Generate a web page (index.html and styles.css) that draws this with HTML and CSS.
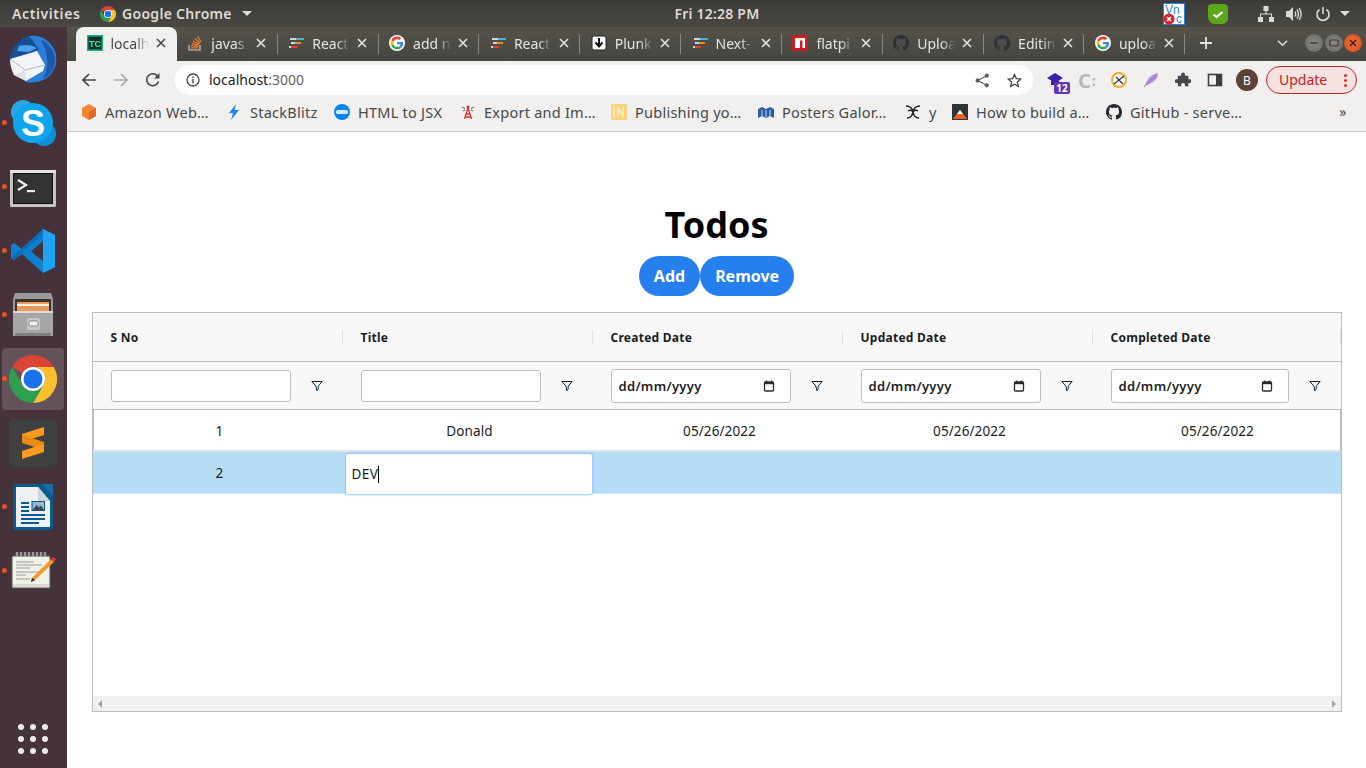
FILE: index.html
```html
<!DOCTYPE html>
<html lang="en">
<head>
    <meta charset="UTF-8">
    <meta name="viewport" content="width=device-width, initial-scale=1.0">
    <title>Todos</title>
    <link rel="stylesheet" href="styles.css">
</head>
<body>
    <!-- shared icons -->
    <svg class="defs" width="0" height="0">
        <symbol id="i-chrome" viewBox="0 0 48 48">
            <path fill="#db4437" d="M24 0A24 24 0 0 1 44.8 12H24A12 12 0 0 0 13.6 18L3.2 12A24 24 0 0 1 24 0z"/>
            <path fill="#fbc02d" d="M44.8 12A24 24 0 0 1 24 48L34.4 30A12 12 0 0 0 24 12z"/>
            <path fill="#2e9e4f" d="M3.2 12L13.6 30A12 12 0 0 0 34.4 30L24 48A24 24 0 0 1 3.2 12z"/>
            <circle cx="24" cy="24" r="12" fill="#fff"/>
            <circle cx="24" cy="24" r="9.5" fill="#1a73e8"/>
        </symbol>
        <symbol id="i-google" viewBox="-6 -6 60 60">
            <circle cx="24" cy="24" r="30" fill="#fff"/>
            <path fill="#EA4335" d="M24 9.5c3.54 0 6.71 1.22 9.21 3.6l6.85-6.85C35.9 2.38 30.47 0 24 0 14.62 0 6.51 5.38 2.56 13.22l7.98 6.19C12.43 13.72 17.74 9.5 24 9.5z"/>
            <path fill="#4285F4" d="M46.98 24.55c0-1.57-.15-3.09-.38-4.55H24v9.02h12.94c-.58 2.96-2.26 5.48-4.78 7.18l7.73 6c4.51-4.18 7.09-10.36 7.09-17.65z"/>
            <path fill="#FBBC05" d="M10.53 28.59c-.48-1.45-.76-2.99-.76-4.59s.27-3.14.76-4.59l-7.98-6.19C.92 16.46 0 20.12 0 24c0 3.88.92 7.54 2.56 10.78l7.97-6.19z"/>
            <path fill="#34A853" d="M24 48c6.48 0 11.93-2.13 15.89-5.81l-7.73-6c-2.15 1.45-4.92 2.3-8.16 2.3-6.26 0-11.57-4.22-13.47-9.91l-7.98 6.19C6.51 42.62 14.62 48 24 48z"/>
        </symbol>
        <symbol id="i-github" viewBox="0 0 16 16">
            <path fill="currentColor" d="M8 0C3.58 0 0 3.58 0 8c0 3.54 2.29 6.53 5.47 7.59.4.07.55-.17.55-.38 0-.19-.01-.82-.01-1.49-2.01.37-2.53-.49-2.69-.94-.09-.23-.48-.94-.82-1.13-.28-.15-.68-.52-.01-.53.63-.01 1.08.58 1.23.82.72 1.21 1.87.87 2.33.66.07-.52.28-.87.51-1.07-1.78-.2-3.64-.89-3.64-3.95 0-.87.31-1.59.82-2.15-.08-.2-.36-1.02.08-2.12 0 0 .67-.21 2.2.82.64-.18 1.32-.27 2-.27.68 0 1.36.09 2 .27 1.53-1.04 2.2-.82 2.2-.82.44 1.1.16 1.92.08 2.12.51.56.82 1.27.82 2.15 0 3.07-1.87 3.75-3.65 3.95.29.25.54.73.54 1.48 0 1.07-.01 1.93-.01 2.2 0 .21.15.46.55.38A8.013 8.013 0 0016 8c0-4.42-3.58-8-8-8z"/>
        </symbol>
        <symbol id="i-lines" viewBox="0 0 16 16">
            <rect x="2" y="3" width="9" height="2" fill="#cfd8dc"/>
            <rect x="8" y="3" width="8" height="2" fill="#4db6c6"/>
            <rect x="3" y="7" width="6" height="2" fill="#cfd8dc"/>
            <rect x="7" y="7" width="6" height="2" fill="#f08a24"/>
            <rect x="1" y="11" width="4" height="2" fill="#cfd8dc"/>
            <rect x="3" y="11" width="6" height="2" fill="#e53935"/>
        </symbol>
        <symbol id="i-close" viewBox="0 0 12 12">
            <path d="M2 2l8 8M10 2l-8 8" stroke="currentColor" stroke-width="1.6" fill="none"/>
        </symbol>
        <symbol id="i-filter" viewBox="0 0 12 12">
            <path d="M.8 1.500h10.400L7.300 6v2.200L6 11 4.800 6z" fill="none" stroke="#181d1f" stroke-width="1"/>
            <path d="M6 11l1.300-2.800V6" fill="none" stroke="#2196f3" stroke-width="1"/>
        </symbol>
        <symbol id="i-cal" viewBox="0 0 12 12">
            <rect x="1.500" y="2" width="9" height="9" rx="1" fill="none" stroke="#2b2b2b" stroke-width="1.300"/>
            <rect x="1" y="2" width="10" height="2.200" fill="#2b2b2b"/>
            <rect x="2.800" y="0.500" width="1.300" height="2" fill="#2b2b2b"/>
            <rect x="7.900" y="0.500" width="1.300" height="2" fill="#2b2b2b"/>
        </symbol>
    </svg>

    <header class="topbar">
        <div class="topbar-left">
            <span class="activities">Activities</span>
            <span class="app-menu">
                <svg class="app-icon"><use href="#i-chrome"/></svg>
                Google Chrome
                <span class="caret"></span>
            </span>
        </div>
        <div class="clock">Fri 12:28 PM</div>
        <div class="tray">
            <svg class="tray-vnc" viewBox="0 0 22 22">
                <rect x="0.500" y="0.500" width="21" height="21" fill="#fff" stroke="#2f7fd8"/>
                <text x="2" y="11" class="vnc-text">Vn</text>
                <text x="13" y="20" class="vnc-text">c</text>
                <circle cx="6" cy="16" r="5.500" fill="#d9232e"/>
                <path d="M4 14l4 4M8 14l-4 4" stroke="#fff" stroke-width="1.500"/>
            </svg>
            <svg class="tray-check" viewBox="0 0 22 22">
                <path d="M5 1h12q4 0 4 4v10q0 5-5 6H7q-5-1-6-7V5q0-4 4-4z" fill="#5ba71b"/>
                <path d="M6.500 11.500l3 2.500 6-5" stroke="#fff" stroke-width="2.200" fill="none"/>
            </svg>
            <svg class="tray-net" viewBox="0 0 16 16">
                <path d="M5.500 0h5v5h-2v2.500H14V11h2v5h-5v-5h2V8.500H3V11h2v5H0v-5h2V7.500h5.500V5h-2z" fill="#dcdad5"/>
            </svg>
            <svg class="tray-sound" viewBox="0 0 16 16">
                <path d="M0 5h3l4-4v14l-4-4H0z" fill="#dcdad5"/>
                <path d="M9 5.500q1.500 2.500 0 5M11 3.500q3 4.500 0 9M13.200 2q3.800 6 0 12" fill="none" stroke="#dcdad5" stroke-width="1.400"/>
            </svg>
            <svg class="tray-power" viewBox="0 0 16 16">
                <path d="M8 1v7" stroke="#dcdad5" stroke-width="1.600"/>
                <path d="M4.500 3.500a6 6 0 1 0 7 0" fill="none" stroke="#dcdad5" stroke-width="1.600"/>
            </svg>
            <span class="caret"></span>
        </div>
    </header>

    <div class="desktop">
        <nav class="dock">
            <div class="dock-item">
                <svg class="dock-icon" viewBox="0 0 48 48">
                    <path d="M20 1Q38-1 46 16 51 32 38 43 28 49 16 47 26 38 28 26 26 12 10 14 12 5 20 1z" fill="#2b7fd6"/>
                    <path d="M32 5Q46 12 46 26 45 38 34 44 40 32 38 22 36 12 32 5z" fill="#1c57a8"/>
                    <path d="M20 1Q8 4 3 16 0 22 1 28L12 21 30 15Q26 8 20 1z" fill="#174f96"/>
                    <path d="M10 11Q20 8 28 13L20 17 8 16z" fill="#4aa3ea"/>
                    <path d="M1 24L28 16 36 30 34 36 17 46 5 40Q1 32 1 24z" fill="#f3f4f7"/>
                    <path d="M1 24l15 11 20-5" fill="none" stroke="#b5bac4" stroke-width="1"/>
                    <path d="M5 40l11-5 1 11" fill="#dfe1e8"/>
                </svg>
            </div>
            <div class="dock-item has-dot">
                <svg class="dock-icon" viewBox="0 0 48 48">
                    <circle cx="14" cy="13" r="12" fill="#2aa5ea"/>
                    <circle cx="35" cy="35" r="12" fill="#0a8fd8"/>
                    <circle cx="24" cy="24" r="20" fill="#0ea5ea"/>
                    <text x="24" y="37" class="skype-text">S</text>
                </svg>
            </div>
            <div class="dock-item has-dot">
                <svg class="dock-icon" viewBox="0 0 48 48">
                    <rect x="1" y="7" width="46" height="37" rx="1.500" fill="#c4c4c2"/>
                    <rect x="1" y="7" width="46" height="3" fill="#e2e2e0"/>
                    <rect x="4" y="10" width="40" height="31" fill="#111"/>
                    <rect x="5" y="11" width="38" height="29" fill="#333"/>
                    <path d="M9 17l8 5-8 5" fill="none" stroke="#eee" stroke-width="2.200"/>
                    <rect x="18" y="27" width="8" height="2.200" fill="#eee"/>
                </svg>
            </div>
            <div class="dock-item has-dot">
                <svg class="dock-icon" viewBox="0 0 48 48">
                    <path d="M34 2l12 6v32l-12 6L13 27 5 33 2 31V18l3-2 8 6z" fill="#0f7fcf"/>
                    <path d="M34 2l12 6v32l-12 6z" fill="#1ea4f2"/>
                    <path d="M34 14L22 24.500 34 34z" fill="#46323a"/>
                    <path d="M2 31l3 2 29-26V2z" fill="#0a6fb8"/>
                </svg>
            </div>
            <div class="dock-item has-dot">
                <svg class="dock-icon" viewBox="0 0 48 48">
                    <path d="M6 2h36l2 6v12H4V8z" fill="#9a9a98"/>
                    <rect x="6" y="8" width="36" height="12" fill="#3a3330"/>
                    <rect x="8" y="11" width="32" height="9" fill="#ee9a5a"/>
                    <rect x="8" y="13" width="32" height="2" fill="#fff2dc"/>
                    <rect x="4" y="20" width="40" height="25" fill="#a6a6a6"/>
                    <rect x="4" y="20" width="40" height="2" fill="#dadada"/>
                    <rect x="6" y="42" width="36" height="3" fill="#7f7f7f"/>
                    <rect x="18" y="27" width="13" height="12" rx="2" fill="#c8c8c8"/>
                    <rect x="20" y="30" width="9" height="5" rx="1" fill="#f2f2f2" stroke="#666" stroke-width=".7"/>
                </svg>
            </div>
            <div class="dock-item has-dot is-active">
                <svg class="dock-icon"><use href="#i-chrome"/></svg>
            </div>
            <div class="dock-item">
                <div class="sublime-box">
                    <svg viewBox="0 0 24 32" width="24" height="32">
                        <path d="M23 0v8L1 15V7z" fill="#fb9a1e"/>
                        <path d="M1 8l22 7v8L1 16z" fill="#e98a12"/>
                        <path d="M23 17v8L1 32v-8z" fill="#fb9a1e"/>
                    </svg>
                </div>
            </div>
            <div class="dock-item has-dot">
                <svg class="dock-icon" viewBox="0 0 48 48">
                    <rect x="4" y="1" width="40" height="46" rx="3" fill="#0b5a8e"/>
                    <path d="M33 1h9q2 0 2 2v10z" fill="#1372ad"/>
                    <path d="M7 4h22l12 14v26H7z" fill="#eef0f1"/>
                    <path d="M29 4v14h12z" fill="#cfd4d8"/>
                    <rect x="12" y="19" width="8" height="2" fill="#0b5a8e"/>
                    <rect x="12" y="23" width="8" height="2" fill="#0b5a8e"/>
                    <rect x="12" y="27" width="8" height="2" fill="#0b5a8e"/>
                    <rect x="22.500" y="18" width="13.500" height="10" fill="#0b5a8e"/>
                    <rect x="23.500" y="19" width="11.500" height="8" fill="#8fb8d6"/>
                    <path d="M23.500 27l4-5 2.500 2.500 2-2 3 4.500z" fill="#444"/>
                    <circle cx="33" cy="20.500" r="1.200" fill="#e8c547"/>
                    <rect x="12" y="31" width="24" height="2" fill="#0b5a8e"/>
                    <rect x="12" y="35" width="24" height="2" fill="#0b5a8e"/>
                    <rect x="12" y="39" width="18" height="2" fill="#0b5a8e"/>
                </svg>
            </div>
            <div class="dock-item has-dot">
                <svg class="dock-icon" viewBox="0 0 48 48">
                    <rect x="3" y="9" width="38" height="32" rx="1" fill="#f1f1ea" stroke="#555"/>
                    <rect x="4" y="37" width="36" height="3" fill="#d9dbcf"/>
                    <path d="M7 15h18M7 18h26M7 21h14M7 25h22M7 28h10M7 32h14" stroke="#999" stroke-width="1"/>
                    <path d="M8 9V5M12 9V5M16 9V5M20 9V5M24 9V5M28 9V5M32 9V5M36 9V5" stroke="#999" stroke-width="2.400"/>
                    <path d="M26 33l-4 2 1-4L42 12l3 3z" fill="#f49a27"/>
                    <path d="M42 12l2-2 3 2-2 3z" fill="#d83a3a"/>
                    <path d="M22 35l1-4 3 2z" fill="#222"/>
                </svg>
            </div>
            <div class="dock-spacer"></div>
            <div class="dock-grid">
                <i></i><i></i><i></i><i></i><i></i><i></i><i></i><i></i><i></i>
            </div>
        </nav>

        <div class="window">
            <div class="tabstrip">
                <div class="tab is-active">
                    <svg class="tab-icon" viewBox="0 0 16 16">
                        <rect width="16" height="16" fill="#0bb58a"/>
                        <rect x="1.500" y="1.500" width="13" height="13" fill="#0f2f2a"/>
                        <text x="8" y="11.500" class="tc-text">TC</text>
                    </svg>
                    <span class="tab-title">localh</span>
                    <svg class="tab-close"><use href="#i-close"/></svg>
                </div>
                <div class="tab">
                    <svg class="tab-icon" viewBox="0 0 16 16">
                        <path d="M2 10v5h11v-5" fill="none" stroke="#d9c6b4" stroke-width="1.200"/>
                        <path d="M4 12.800h7M4.200 10.700l7 .6M4.900 8.300l6.800 1.800M6 6l6.200 3M8 3.500l5 4.500M10.500 1l3.500 6" stroke="#f48024" stroke-width="1.200" fill="none"/>
                    </svg>
                    <span class="tab-title">javas</span>
                    <svg class="tab-close"><use href="#i-close"/></svg>
                </div>
                <div class="tab">
                    <svg class="tab-icon"><use href="#i-lines"/></svg>
                    <span class="tab-title">React</span>
                    <svg class="tab-close"><use href="#i-close"/></svg>
                </div>
                <div class="tab">
                    <svg class="tab-icon"><use href="#i-google"/></svg>
                    <span class="tab-title">add n</span>
                    <svg class="tab-close"><use href="#i-close"/></svg>
                </div>
                <div class="tab">
                    <svg class="tab-icon"><use href="#i-lines"/></svg>
                    <span class="tab-title">React</span>
                    <svg class="tab-close"><use href="#i-close"/></svg>
                </div>
                <div class="tab">
                    <svg class="tab-icon" viewBox="0 0 16 16">
                        <rect x="1" y="1" width="14" height="14" rx="2" fill="#fff" stroke="#222"/>
                        <path d="M8 3v8M4.500 7.500L8 11.500l3.500-4" fill="none" stroke="#111" stroke-width="2"/>
                    </svg>
                    <span class="tab-title">Plunk</span>
                    <svg class="tab-close"><use href="#i-close"/></svg>
                </div>
                <div class="tab">
                    <svg class="tab-icon"><use href="#i-lines"/></svg>
                    <span class="tab-title">Next-</span>
                    <svg class="tab-close"><use href="#i-close"/></svg>
                </div>
                <div class="tab">
                    <svg class="tab-icon" viewBox="0 0 16 16">
                        <rect width="16" height="16" fill="#cb1c22"/>
                        <path d="M3 3h10v10h-2.500V5.500H8V13H3z" fill="#fff"/>
                    </svg>
                    <span class="tab-title">flatpi</span>
                    <svg class="tab-close"><use href="#i-close"/></svg>
                </div>
                <div class="tab">
                    <svg class="tab-icon gh"><use href="#i-github"/></svg>
                    <span class="tab-title">Uploa</span>
                    <svg class="tab-close"><use href="#i-close"/></svg>
                </div>
                <div class="tab">
                    <svg class="tab-icon gh"><use href="#i-github"/></svg>
                    <span class="tab-title">Editin</span>
                    <svg class="tab-close"><use href="#i-close"/></svg>
                </div>
                <div class="tab">
                    <svg class="tab-icon"><use href="#i-google"/></svg>
                    <span class="tab-title">uploa</span>
                    <svg class="tab-close"><use href="#i-close"/></svg>
                </div>
                <svg class="new-tab" viewBox="0 0 12 12">
                    <path d="M6 0v12M0 6h12" stroke="#e6e4df" stroke-width="1.800"/>
                </svg>
                <div class="strip-right">
                    <svg class="tab-search" viewBox="0 0 12 8">
                        <path d="M1 1.500l5 5 5-5" fill="none" stroke="#e6e4df" stroke-width="1.500"/>
                    </svg>
                    <span class="win-btn"><svg viewBox="0 0 10 10"><path d="M2 5h6" stroke="#3a3a36" stroke-width="1.300"/></svg></span>
                    <span class="win-btn"><svg viewBox="0 0 10 10"><rect x="1.500" y="2.500" width="7" height="5" rx="1" fill="none" stroke="#3a3a36"/></svg></span>
                    <span class="win-btn is-close"><svg viewBox="0 0 10 10"><path d="M2.500 2.500l5 5M7.500 2.500l-5 5" stroke="#4a2414" stroke-width="1.300"/></svg></span>
                </div>
            </div>

            <div class="toolbar">
                <svg class="nav-btn" viewBox="0 0 16 16"><path d="M15 8H2M8 2L2 8l6 6" fill="none" stroke="#45494d" stroke-width="1.700"/></svg>
                <svg class="nav-btn" viewBox="0 0 16 16"><path d="M1 8h13M8 2l6 6-6 6" fill="none" stroke="#a9abac" stroke-width="1.700"/></svg>
                <svg class="nav-btn" viewBox="0 0 16 16"><path d="M13.500 9.500A6 6 0 1 1 12.300 3.800" fill="none" stroke="#45494d" stroke-width="1.700"/><path d="M14.500 1v5.500H9z" fill="#45494d"/></svg>
                <div class="omnibox">
                    <svg class="omni-info" viewBox="0 0 14 14">
                        <circle cx="7" cy="7" r="6" fill="none" stroke="#45494d" stroke-width="1.300"/>
                        <path d="M7 6v4.500M7 3.500v1.400" stroke="#45494d" stroke-width="1.400"/>
                    </svg>
                    <span class="omni-url">localhost<span class="omni-port">:3000</span></span>
                    <span class="omni-gap"></span>
                    <svg class="omni-btn" viewBox="0 0 14 14">
                        <circle cx="11" cy="2.500" r="2" fill="#5f6368"/><circle cx="11" cy="11.500" r="2" fill="#5f6368"/><circle cx="2.500" cy="7" r="2" fill="#5f6368"/>
                        <path d="M11 2.500L2.500 7l8.500 4.500" fill="none" stroke="#5f6368" stroke-width="1.100"/>
                    </svg>
                    <svg class="omni-btn" viewBox="0 0 14 14">
                        <path d="M7 1.300l1.700 3.900 4.200.4-3.200 2.800.9 4.100L7 10.400l-3.600 2.100.9-4.100L1.100 5.600l4.200-.4z" fill="none" stroke="#45494d" stroke-width="1.200"/>
                    </svg>
                </div>
                <div class="ext-row">
                    <span class="ext">
                        <svg viewBox="0 0 16 14" width="16" height="14"><path d="M8 0l8 5-8 5-8-5z" fill="#3b1fa8"/><path d="M4 8v4h8V8z" fill="#3b1fa8"/></svg>
                        <span class="ext-badge">12</span>
                    </span>
                    <span class="ext ext-c">C<span class="ext-c-dots">:</span></span>
                    <span class="ext">
                        <svg viewBox="0 0 16 16" width="16" height="16"><circle cx="8" cy="8" r="7" fill="#fff" stroke="#f4a92a" stroke-width="2"/><path d="M3 12L13 4M5 5l7 7" stroke="#333" stroke-width="1.200"/></svg>
                    </span>
                    <span class="ext">
                        <svg viewBox="0 0 16 16" width="16" height="16"><path d="M1 15L5 7Q9 2 15 1 15 7 10 10T3 13z" fill="#b491dc"/><path d="M1 15L13 3" stroke="#8a63c2" stroke-width=".8"/></svg>
                    </span>
                    <span class="ext">
                        <svg viewBox="0 0 16 16" width="16" height="16"><path d="M6 2.500a2 2 0 0 1 4 0V4h3.500v3.500H15a2 2 0 0 1 0 4h-1.500V15H10v-1.500a2 2 0 0 0-4 0V15H2.500v-3.500H1a2 2 0 0 1 0-4h1.500V4H6z" fill="#45494d" transform="translate(.5 0) scale(.95)"/></svg>
                    </span>
                    <span class="ext">
                        <svg viewBox="0 0 16 16" width="16" height="16"><rect x="1.500" y="2.500" width="13" height="11" fill="none" stroke="#3c4043" stroke-width="1.600"/><rect x="9" y="2.500" width="5.500" height="11" fill="#3c4043"/></svg>
                    </span>
                    <span class="avatar">B</span>
                </div>
                <div class="update-pill">
                    <span class="update-label">Update</span>
                    <span class="update-dots"><i></i><i></i><i></i></span>
                </div>
            </div>

            <div class="bookmarks">
                <span class="bookmark">
                    <svg class="bm-icon" viewBox="0 0 16 16"><path d="M8 0l7 4v8l-7 4-7-4V4z" fill="#f58536"/><path d="M8 8l7-4v8l-7 4z" fill="#e06a1c"/></svg>
                    <span>Amazon Web…</span>
                </span>
                <span class="bookmark">
                    <svg class="bm-icon" viewBox="0 0 16 16"><path d="M10 0L3 9h4l-2 7 8-10H8.500z" fill="#1389fd"/></svg>
                    <span>StackBlitz</span>
                </span>
                <span class="bookmark">
                    <svg class="bm-icon" viewBox="0 0 16 16"><circle cx="8" cy="8" r="8" fill="#0d83ef"/><rect x="2" y="6" width="12" height="4" rx="1.500" fill="#d5ecff"/></svg>
                    <span>HTML to JSX</span>
                </span>
                <span class="bookmark">
                    <svg class="bm-icon" viewBox="0 0 16 16"><path d="M8 4L4.500 15M8 4l3.500 11M6 10h4M5 13h6" stroke="#d32f2f" stroke-width="1.300" fill="none"/><path d="M2 3l3 1.500M14 3l-3 1.500M3 7l2-1M13 7l-2-1" stroke="#444" stroke-width=".9"/><circle cx="8" cy="3" r="1.500" fill="#d32f2f"/></svg>
                    <span>Export and Im…</span>
                </span>
                <span class="bookmark">
                    <svg class="bm-icon" viewBox="0 0 16 16"><rect width="16" height="16" fill="#fbd27d"/><path d="M7 13V3l5 10V3" stroke="#fff1c9" stroke-width="1.200" fill="none"/><path d="M3 3v10" stroke="#fff1c9" stroke-width="1.500"/></svg>
                    <span>Publishing yo…</span>
                </span>
                <span class="bookmark">
                    <svg class="bm-icon" viewBox="0 0 16 16"><path d="M0 5l4-2 4 2 4-2 4 2v9l-4-2-4 2-4-2-4 2z" fill="#2a5fa8"/><path d="M4 6v6M8 6v7M12 6v6" stroke="#bcd3ec" stroke-width="1"/></svg>
                    <span>Posters Galor…</span>
                </span>
                <span class="bookmark">
                    <svg class="bm-icon" viewBox="0 0 16 16"><path d="M1 2q6 0 7 6-1 6-6 6M15 2q-6 0-7 6 1 6 6 6M3 7q3-2 5 1M13 7q-3-2-5 1" fill="none" stroke="#222" stroke-width="1.500"/></svg>
                    <span>y</span>
                </span>
                <span class="bookmark">
                    <svg class="bm-icon" viewBox="0 0 16 16"><rect width="16" height="16" fill="#2d3436"/><path d="M1 15L8 6l7 9z" fill="#e8642a"/><path d="M8 6l3 4H5z" fill="#fff"/></svg>
                    <span>How to build a…</span>
                </span>
                <span class="bookmark">
                    <svg class="bm-icon bm-gh"><use href="#i-github"/></svg>
                    <span>GitHub - serve…</span>
                </span>
                <span class="bm-more">»</span>
            </div>

            <main class="page">
                <h1>Todos</h1>
                <div class="actions">
                    <button class="btn">Add</button>
                    <button class="btn">Remove</button>
                </div>

                <div class="grid">
                    <div class="grid-head">
                        <div class="head-cell">S No</div>
                        <div class="head-cell">Title</div>
                        <div class="head-cell">Created Date</div>
                        <div class="head-cell">Updated Date</div>
                        <div class="head-cell">Completed Date</div>
                    </div>
                    <div class="grid-filters">
                        <div class="filter-cell">
                            <input class="filter-input" type="text">
                            <svg class="filter-icon"><use href="#i-filter"/></svg>
                        </div>
                        <div class="filter-cell">
                            <input class="filter-input" type="text">
                            <svg class="filter-icon"><use href="#i-filter"/></svg>
                        </div>
                        <div class="filter-cell">
                            <div class="date-input">dd/mm/yyyy<svg class="cal-icon"><use href="#i-cal"/></svg></div>
                            <svg class="filter-icon"><use href="#i-filter"/></svg>
                        </div>
                        <div class="filter-cell">
                            <div class="date-input">dd/mm/yyyy<svg class="cal-icon"><use href="#i-cal"/></svg></div>
                            <svg class="filter-icon"><use href="#i-filter"/></svg>
                        </div>
                        <div class="filter-cell is-last">
                            <div class="date-input">dd/mm/yyyy<svg class="cal-icon"><use href="#i-cal"/></svg></div>
                            <svg class="filter-icon"><use href="#i-filter"/></svg>
                        </div>
                    </div>
                    <div class="grid-body">
                        <div class="grid-row">
                            <div class="cell">1</div>
                            <div class="cell">Donald</div>
                            <div class="cell">05/26/2022</div>
                            <div class="cell">05/26/2022</div>
                            <div class="cell">05/26/2022</div>
                        </div>
                        <div class="grid-row is-selected">
                            <div class="cell">2</div>
                            <div class="cell is-editing">
                                <div class="cell-editor"><span class="editor-text">DEV</span></div>
                            </div>
                            <div class="cell"></div>
                            <div class="cell"></div>
                            <div class="cell"></div>
                        </div>
                    </div>
                    <div class="hscroll">
                        <span class="arrow-left"></span>
                        <span class="arrow-right"></span>
                    </div>
                </div>
            </main>
        </div>
    </div>
</body>
</html>
```

FILE: styles.css
```css
* {
    box-sizing: border-box;
}

html, body {
    margin: 0;
    height: 100%;
    overflow: hidden;
}

body {
    font-family: "Noto Sans", "Open Sans", sans-serif;
    display: flex;
    flex-direction: column;
    width: 1366px;
    height: 768px;
    background-color: #fff;
}

.defs {
    position: absolute;
}

/* top bar */
.topbar {
    height: 27px;
    flex: none;
    display: flex;
    align-items: center;
    position: relative;
    background: linear-gradient(#3b3a36, #4a4843);
    color: #dfdbd2;
    font-size: 14px;
    font-weight: 600;
    letter-spacing: 0.3px;
}

.topbar-left {
    display: flex;
    align-items: center;
}

.activities {
    margin-left: 12px;
    width: 88px;
    letter-spacing: 0.6px;
}

.app-menu {
    display: flex;
    align-items: center;
    gap: 6px;
}

.app-icon {
    width: 16px;
    height: 16px;
}

.caret {
    display: inline-block;
    width: 0;
    height: 0;
    margin-left: 4px;
    border-left: 5px solid transparent;
    border-right: 5px solid transparent;
    border-top: 5px solid #dfdbd2;
}

.clock {
    position: absolute;
    left: 667px;
    width: 100px;
    text-align: center;
    white-space: nowrap;
    letter-spacing: 0.2px;
}

.tray {
    margin-left: auto;
    display: flex;
    align-items: center;
    margin-right: 16px;
}

.tray-vnc {
    width: 22px;
    height: 22px;
    margin-right: 22px;
}

.vnc-text {
    font-family: "Liberation Sans", sans-serif;
    font-size: 12px;
    font-weight: 400;
    letter-spacing: 0;
    fill: #2f7fd8;
}

.tc-text {
    font-family: "Liberation Sans", sans-serif;
    font-size: 9px;
    font-weight: 700;
    letter-spacing: 0;
    text-anchor: middle;
    fill: #3ce0b5;
}

.skype-text {
    font-family: "Liberation Sans", sans-serif;
    font-size: 36px;
    font-weight: 700;
    text-anchor: middle;
    fill: #fff;
}

.tray-check {
    width: 22px;
    height: 22px;
    margin-right: 29px;
}

.tray-net {
    width: 16px;
    height: 16px;
    margin-right: 12px;
}

.tray-sound {
    width: 16px;
    height: 16px;
    margin-right: 13px;
}

.tray-power {
    width: 16px;
    height: 16px;
    margin-right: 9px;
}

.tray .caret {
    margin-left: 0;
}

/* dock and window */
.desktop {
    flex: 1;
    display: flex;
    min-height: 0;
}

.dock {
    width: 67px;
    flex: none;
    display: flex;
    flex-direction: column;
    background: #46323a;
}

.dock-item {
    height: 64px;
    flex: none;
    display: flex;
    align-items: center;
    justify-content: center;
    position: relative;
}

.dock-icon {
    width: 48px;
    height: 48px;
    margin-right: 1px;
}

.has-dot::before {
    content: "";
    position: absolute;
    left: 2px;
    top: 29px;
    width: 5px;
    height: 5px;
    border-radius: 50%;
    background: #e95420;
}

.is-active::after {
    content: "";
    position: absolute;
    left: 2px;
    top: 1px;
    width: 62px;
    height: 62px;
    border-radius: 4px;
    background: rgba(255, 255, 255, 0.16);
}

.is-active .dock-icon {
    position: relative;
    z-index: 1;
}

.is-active::before {
    z-index: 1;
}

.sublime-box {
    width: 48px;
    height: 48px;
    margin-right: 1px;
    border-radius: 5px;
    background: #404040;
    display: flex;
    align-items: center;
    justify-content: center;
}

.dock-spacer {
    flex: 1;
}

.dock-grid {
    display: grid;
    grid-template-columns: repeat(3, 6px);
    gap: 6px;
    justify-content: center;
    margin: 0 1px 14px 0;
}

.dock-grid i {
    width: 6px;
    height: 6px;
    border-radius: 50%;
    background: #ececec;
}

.window {
    flex: 1;
    min-width: 0;
    display: flex;
    flex-direction: column;
}

/* tabs */
.tabstrip {
    height: 34px;
    flex: none;
    display: flex;
    padding-left: 9px;
    background: linear-gradient(#55524c, #47453f);
    color: #e6e4df;
    font-size: 14px;
}

.tab {
    width: 100.85px;
    flex: none;
    display: flex;
    align-items: center;
    padding: 0 0 2px 10.500px;
    position: relative;
}

.tab::after {
    content: "";
    position: absolute;
    right: 0;
    top: 7px;
    bottom: 7px;
    width: 1px;
    background: #8b8984;
}

.tab.is-active {
    background: #f1f0ee;
    color: #45494d;
    border-radius: 8px 8px 0 0;
}

.tab.is-active::after {
    display: none;
}

.tab-icon {
    width: 16px;
    height: 16px;
    flex: none;
}

.tab-icon.gh {
    color: #2b3137;
}

.tab-title {
    width: 38px;
    margin-left: 8px;
    overflow: hidden;
    white-space: nowrap;
    -webkit-mask-image: linear-gradient(to right, #000 65%, transparent);
    mask-image: linear-gradient(to right, #000 65%, transparent);
}

.tab-close {
    width: 12px;
    height: 12px;
    flex: none;
    margin-left: 6px;
}

.new-tab {
    width: 12px;
    height: 12px;
    align-self: center;
    margin-left: 15px;
    margin-bottom: 2px;
}

.strip-right {
    margin-left: auto;
    margin-right: 4px;
    display: flex;
    align-items: center;
    padding-bottom: 2px;
}

.tab-search {
    width: 11px;
    height: 8px;
    margin-right: 16px;
}

.win-btn {
    width: 18px;
    height: 18px;
    margin-left: 1.500px;
    border-radius: 50%;
    background: radial-gradient(#8a8882, #6a6862);
    display: flex;
    align-items: center;
    justify-content: center;
}

.win-btn svg {
    width: 12px;
    height: 12px;
}

.win-btn.is-close {
    background: radial-gradient(#f0733f, #d9481a);
}

/* toolbar */
.toolbar {
    height: 34px;
    flex: none;
    display: flex;
    align-items: center;
    padding-left: 14px;
    background: #f1f0ee;
}

.nav-btn {
    width: 16px;
    height: 16px;
    margin-right: 16px;
    margin-top: 4px;
}

.omnibox {
    width: 858px;
    height: 30px;
    margin-left: -2px;
    margin-top: 4px;
    flex: none;
    border-radius: 15px;
    background: #fff;
    display: flex;
    align-items: center;
    padding-left: 11px;
    padding-right: 11px;
    font-size: 14px;
    color: #202124;
}

.omni-info {
    width: 14px;
    height: 14px;
}

.omni-url {
    margin-left: 9px;
    margin-top: -2px;
}

.omni-port {
    color: #5f6368;
}

.omni-gap {
    flex: 1;
}

.omni-btn {
    width: 15px;
    height: 15px;
    margin-left: 17px;
}

.ext-row {
    display: flex;
    align-items: center;
    margin-top: 4px;
    margin-left: 6px;
}

.ext {
    width: 32px;
    height: 28px;
    display: flex;
    align-items: center;
    justify-content: center;
    position: relative;
    flex: none;
}

.ext-badge {
    position: absolute;
    left: 15px;
    bottom: 0;
    width: 16px;
    height: 12px;
    border-radius: 2px;
    background: #6234b8;
    color: #fff;
    font-size: 10px;
    font-weight: 700;
    line-height: 12px;
    text-align: center;
}

.ext-c {
    font-size: 20px;
    font-weight: 700;
    color: #b6b8ba;
}

.ext-c-dots {
    font-size: 15px;
    margin-left: 1px;
}

.avatar {
    width: 22px;
    height: 22px;
    margin-left: 5px;
    border-radius: 50%;
    background: #5d4037;
    color: #fff;
    font-size: 12px;
    display: flex;
    align-items: center;
    justify-content: center;
}

.update-pill {
    width: 91px;
    height: 28px;
    margin-top: 4px;
    margin-left: 8px;
    flex: none;
    display: flex;
    align-items: center;
    justify-content: space-between;
    padding: 0 9px 0 12px;
    border: 1px solid #c5221f;
    border-radius: 14px;
    background: #f5e2e1;
    color: #c5221f;
    font-size: 14px;
}

.update-label {
    margin-top: -2px;
}

.update-dots {
    display: flex;
    flex-direction: column;
    gap: 2px;
}

.update-dots i {
    width: 3px;
    height: 3px;
    border-radius: 50%;
    background: #d93025;
}

/* bookmarks */
.bookmarks {
    height: 37px;
    flex: none;
    display: grid;
    grid-template-columns: 145px 108px 126px 151px 147px 147px 47px 154px 1fr 24px;
    align-items: center;
    padding: 0 11px 3px 14px;
    background: #f1f0ee;
    border-bottom: 1px solid #d0cfcc;
    color: #45494d;
    font-size: 14.500px;
    letter-spacing: 0.25px;
}

.bookmark {
    display: flex;
    align-items: center;
    gap: 8px;
    white-space: nowrap;
    overflow: hidden;
}

.bm-icon {
    width: 16px;
    height: 16px;
    flex: none;
}

.bm-gh {
    color: #24292f;
}

.bm-more {
    font-size: 14px;
    text-align: center;
}

/* page */
.page {
    flex: 1;
    min-height: 0;
    padding: 0 25px;
    display: flex;
    flex-direction: column;
    align-items: center;
    background: #fff;
}

h1 {
    margin: 67px 0 0;
    font-size: 36px;
    line-height: 52px;
    font-weight: 700;
    color: #000;
}

.actions {
    display: flex;
    margin-top: 5px;
}

.btn {
    height: 40px;
    padding: 0 15px;
    border: none;
    border-radius: 20px;
    background-color: #2580ee;
    color: #fff;
    font-family: inherit;
    font-size: 16px;
    font-weight: 700;
    cursor: pointer;
}

/* data grid */
.grid {
    width: 1250px;
    height: 400px;
    margin-top: 16px;
    flex: none;
    display: flex;
    flex-direction: column;
    border: 1px solid #babfc7;
    color: #181d1f;
    font-size: 13px;
}

.grid-head,
.grid-filters {
    display: grid;
    grid-template-columns: 250px 250px 250px 250px 248px;
    flex: none;
    background: #f8f8f8;
    border-bottom: 1px solid #babfc7;
}

.grid-head {
    height: 49px;
}

.grid-filters {
    height: 48px;
}

.head-cell {
    display: flex;
    align-items: center;
    padding-left: 18px;
    font-size: 12px;
    font-weight: 700;
    letter-spacing: 0.25px;
    position: relative;
}

.head-cell::after {
    content: "";
    position: absolute;
    right: 0;
    top: 17px;
    height: 14px;
    width: 1px;
    background: #dfe1e5;
}

.filter-cell {
    display: flex;
    align-items: center;
    padding-left: 18px;
}

.filter-input,
.date-input {
    width: 180px;
    height: 32px;
    flex: none;
    border: 1px solid #babfc7;
    border-radius: 3px;
    background: #fff;
    margin: 0;
    padding: 0 6px;
}

.date-input {
    display: flex;
    align-items: center;
    justify-content: space-between;
    padding: 0 15px 0 7px;
    height: 34px;
    font-size: 13px;
    font-weight: 600;
    letter-spacing: 0.3px;
    color: #1f1f1f;
}

.is-last .date-input {
    width: 178px;
}

.cal-icon {
    width: 12px;
    height: 12px;
}

.filter-icon {
    width: 12px;
    height: 12px;
    margin-left: 20px;
}

.grid-body {
    flex: 1;
    min-height: 0;
    overflow: hidden;
}

.grid-row {
    height: 42px;
    display: grid;
    grid-template-columns: 250px 250px 250px 250px 246px;
    padding-top: 2px;
    border-left: 1px solid #babfc7;
    border-right: 1px solid #babfc7;
    border-bottom: 2px solid #dde2eb;
    width: 1248px;
}

.grid-row.is-selected {
    padding-top: 0;
    background: #b7dcf6;
    border-left-color: #b7dcf6;
    border-right-color: #b7dcf6;
    border-bottom: 1px solid #cfe6f7;
}

.cell {
    display: flex;
    align-items: center;
    justify-content: center;
    padding-left: 2px;
    font-size: 13.500px;
    letter-spacing: 0.1px;
}

.cell.is-editing {
    align-items: stretch;
    padding: 2px 2px 0 2px;
    margin-bottom: -1px;
}

.cell-editor {
    flex: 1;
    display: flex;
    align-items: center;
    padding-left: 6px;
    background: #fff;
    border-radius: 2px;
    box-shadow: 0 0 2px 1px #8cc8f3;
}

.editor-text {
    border-right: 1px solid #000;
    line-height: 17px;
    letter-spacing: 0.4px;
}

.hscroll {
    height: 15px;
    flex: none;
    display: flex;
    align-items: center;
    justify-content: space-between;
    padding: 0 5px;
    background: #f1f1f1;
}

.arrow-left,
.arrow-right {
    width: 0;
    height: 0;
    border-top: 4px solid transparent;
    border-bottom: 4px solid transparent;
}

.arrow-left {
    border-right: 4px solid #a3a3a3;
}

.arrow-right {
    border-left: 4px solid #a3a3a3;
}
```
